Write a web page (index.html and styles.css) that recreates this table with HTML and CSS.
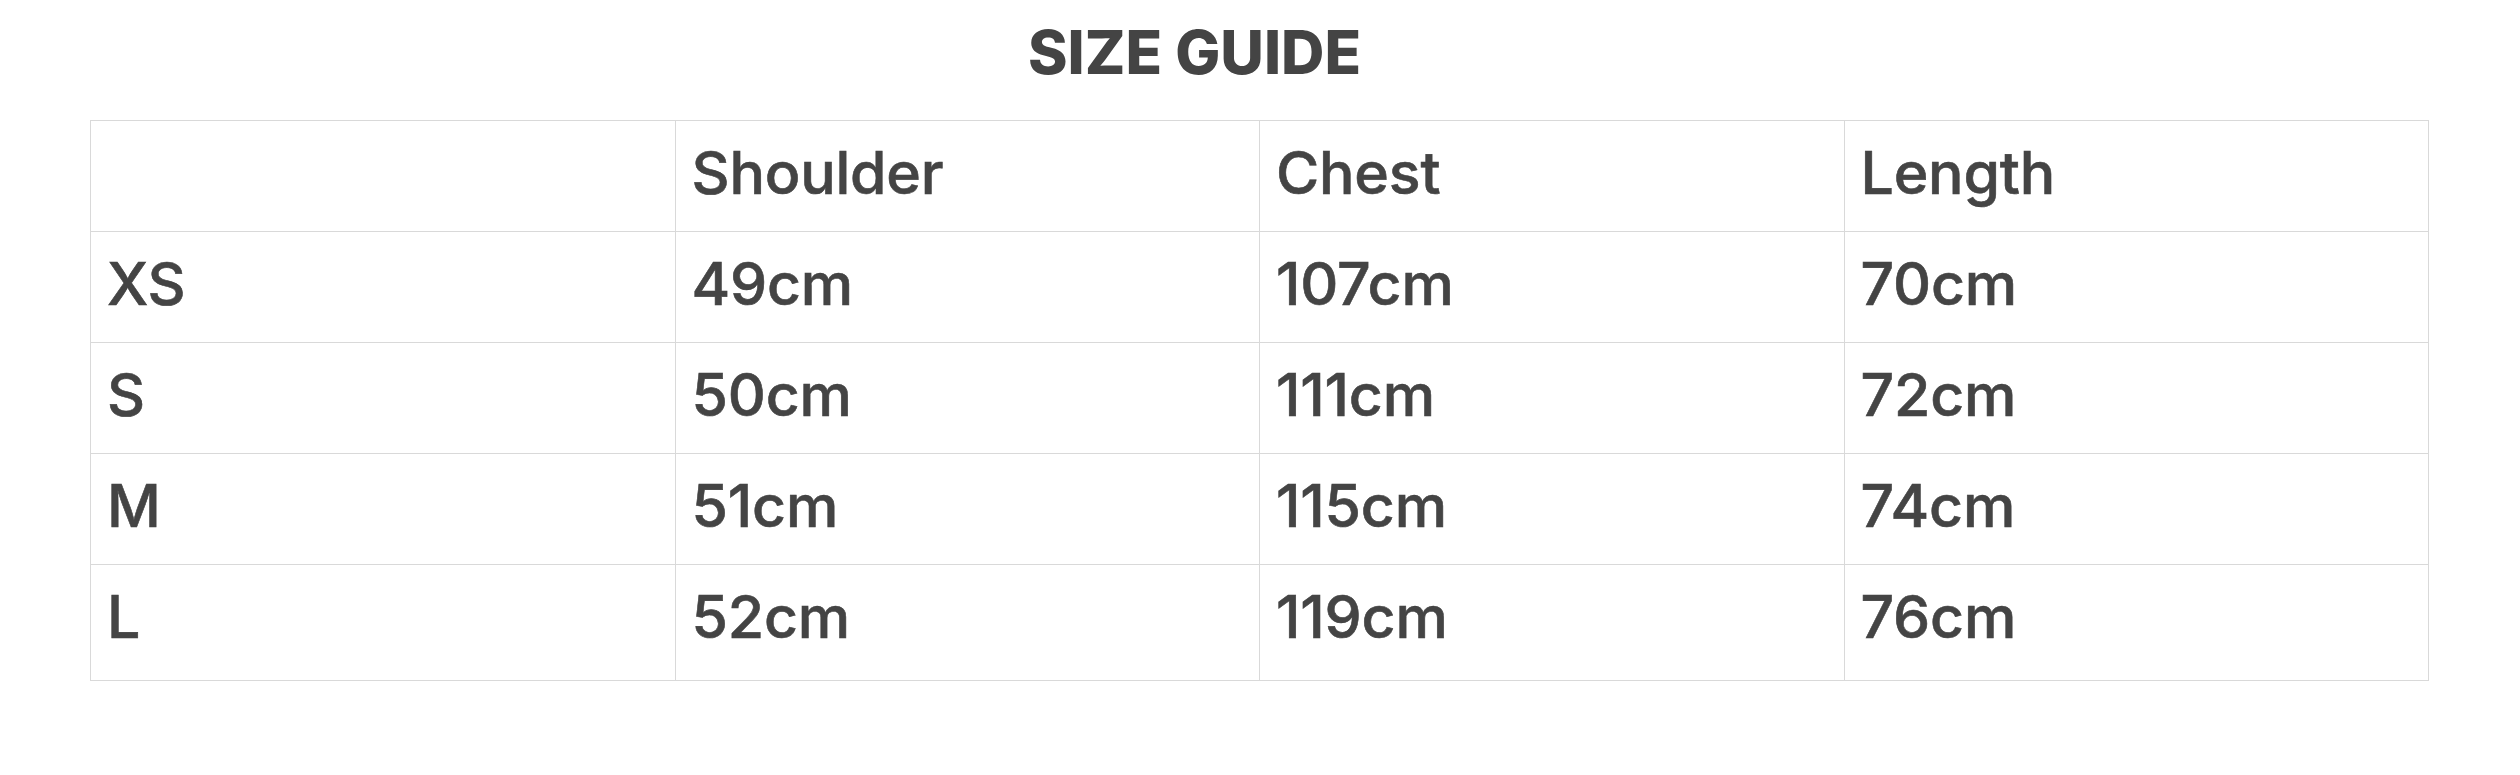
FILE: index.html
```html
<!DOCTYPE html>
<html lang="en">
<head>
<meta charset="utf-8">
<title>Size Guide</title>
<link rel="stylesheet" href="styles.css">
</head>
<body>
<div class="guide">
  <h1 class="guide-title">SIZE GUIDE</h1>
  <table class="size-table">
    <thead>
      <tr><th></th><th>Shoulder</th><th>Chest</th><th>Length</th></tr>
    </thead>
    <tbody>
      <tr><td>XS</td><td>49cm</td><td>107cm</td><td>70cm</td></tr>
      <tr><td>S</td><td>50cm</td><td>111cm</td><td>72cm</td></tr>
      <tr><td>M</td><td>51cm</td><td>115cm</td><td>74cm</td></tr>
      <tr class="last"><td>L</td><td>52cm</td><td>119cm</td><td>76cm</td></tr>
    </tbody>
  </table>
</div>
</body>
</html>
```

FILE: styles.css
```css
html, body {
  margin: 0;
  padding: 0;
  background: #ffffff;
}
body {
  font-family: Inter, "Liberation Sans", sans-serif;
  color: #444444;
}
.guide {
  padding: 16px 91px 0 90px;
}
.guide-title {
  margin: 0 0 32px 0;
  padding-right: 130px;
  text-align: center;
  font-size: 60px;
  line-height: 72px;
  font-weight: 800;
  letter-spacing: 0;
}
.size-table {
  width: 100%;
  border-collapse: collapse;
  table-layout: fixed;
}
.size-table th,
.size-table td {
  border: 1px solid #d9d9d9;
  padding: 16px 16px 22px 16px;
  text-align: left;
  font-size: 59px;
  line-height: 72px;
  font-weight: 500;
  letter-spacing: -0.2px;
  color: #444444;
  -webkit-text-stroke: 0.6px #444444;
}
.size-table tr.last td {
  padding-bottom: 27px;
}
```
